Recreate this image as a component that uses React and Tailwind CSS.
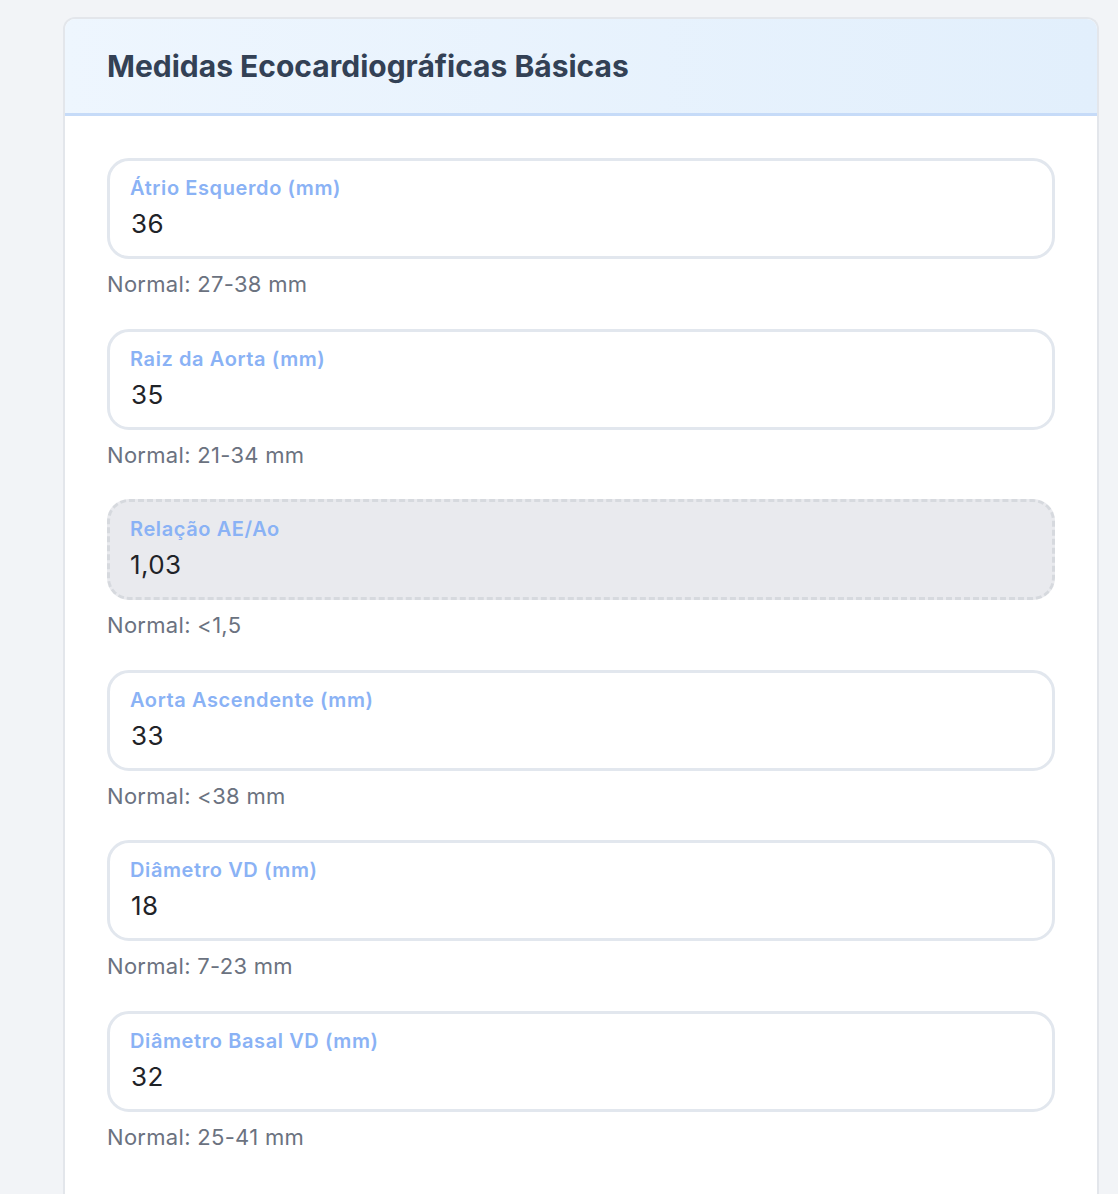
const MEDIDAS = [
  { label: 'Átrio Esquerdo (mm)', value: '36', normal: 'Normal: 27-38 mm' },
  { label: 'Raiz da Aorta (mm)', value: '35', normal: 'Normal: 21-34 mm' },
  { label: 'Relação AE/Ao', value: '1,03', normal: 'Normal: <1,5', calc: true },
  { label: 'Aorta Ascendente (mm)', value: '33', normal: 'Normal: <38 mm' },
  { label: 'Diâmetro VD (mm)', value: '18', normal: 'Normal: 7-23 mm' },
  { label: 'Diâmetro Basal VD (mm)', value: '32', normal: 'Normal: 25-41 mm' },
]

function Campo({ label, value, normal, calc }) {
  return (
    <div className="mb-[30.6px]">
      <div
        className={
          calc
            ? 'h-[101px] rounded-[22px] border-[3px] border-dashed border-[#d6d9de] bg-[#e9eaee] pl-[20px] pt-[15px]'
            : 'h-[101px] rounded-[22px] border-[3px] border-[#e2e7ee] bg-white pl-[20px] pt-[15px]'
        }
      >
        <div className="text-[20px] leading-[24px] font-semibold tracking-[0.6px] text-[#8ab2f5]">{label}</div>
        <div className={'mt-[8px] text-[26px] leading-[32px] tracking-[0.4px] text-[#1f2328] ' + (calc ? '' : 'pl-[1px]')}>{value}</div>
      </div>
      <p className="mt-[11px] text-[22px] leading-[28px] tracking-[0.3px] text-[#6b7280]">{normal}</p>
    </div>
  )
}

export default function App() {
  return (
    <div className="min-h-screen bg-[#f2f4f7] pt-[17px] pl-[63px] pr-[19px] font-['Inter',sans-serif]">
      <div className="rounded-t-[12px] border-2 border-b-0 border-[#e3e6eb] bg-white overflow-hidden min-h-[1180px]">
        {/* Cabeçalho */}
        <div className="h-[97px] flex items-center px-[42px] bg-gradient-to-r from-[#eef6fe] to-[#e2effc] border-b-[3px] border-[#c6dbf8]">
          <h2 className="text-[30px] font-bold text-[#334155]">Medidas Ecocardiográficas Básicas</h2>
        </div>

        {/* Campos */}
        <div className="px-[42px] pt-[42px]">
          {MEDIDAS.map(m => (
            <Campo key={m.label} {...m} />
          ))}
        </div>
      </div>
    </div>
  )
}
